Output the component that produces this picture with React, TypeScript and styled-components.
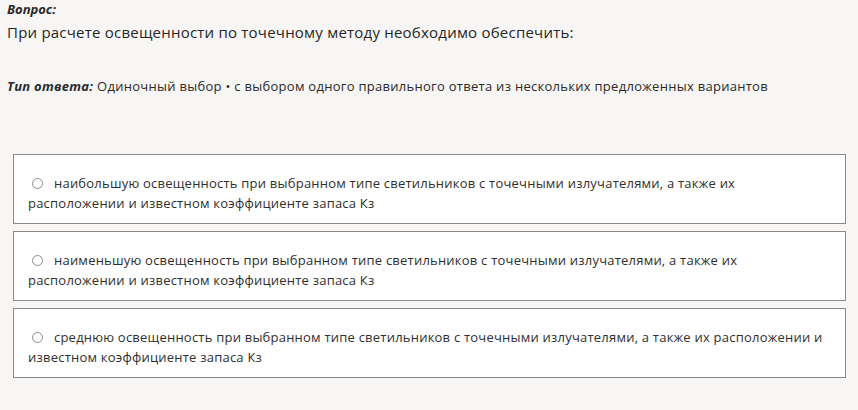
import React from 'react'
import styled, { createGlobalStyle } from 'styled-components'

const GlobalStyle = createGlobalStyle`
  html, body {
    margin: 0;
    padding: 0;
    background: #f7f6f5;
  }
  body {
    font-family: 'Open Sans', 'Noto Sans', sans-serif;
    color: #222;
  }
`

const Page = styled.div`
  width: 858px;
  height: 410px;
  padding: 0 12px 0 7px;
  box-sizing: border-box;
  overflow: hidden;
`

const Label = styled.div`
  font-size: 13px;
  font-weight: 700;
  font-style: italic;
  line-height: 18px;
  color: #2a2a2a;
`

const QuestionText = styled.div`
  font-size: 15px;
  line-height: 20px;
  letter-spacing: 0.22px;
  margin-top: 4px;
  color: #262626;
`

const AnswerType = styled.div`
  margin-top: 35px;
  font-size: 13px;
  line-height: 18px;
  letter-spacing: 0.28px;
  color: #2a2a2a;

  b {
    font-weight: 700;
    font-style: italic;
  }
`

const Options = styled.div`
  margin: 59px 0 0 6px;
  display: flex;
  flex-direction: column;
  gap: 7px;
`

const Option = styled.label`
  display: block;
  height: 70px;
  box-sizing: border-box;
  border: 1px solid #8a8a8a;
  background: #fff;
  padding: 18px 14px 0 14px;
  font-size: 13px;
  line-height: 20px;
  letter-spacing: 0.22px;
  color: #2f2f2f;
  cursor: pointer;
`

const Radio = styled.span`
  display: inline-block;
  width: 9px;
  height: 9px;
  border: 1px solid #8c8c8c;
  border-radius: 50%;
  margin: 0 11px 0 4px;
  vertical-align: -1px;
  background: #fff;
`

const lineBreaks = [
  ['наибольшую освещенность при выбранном типе светильников с точечными излучателями, а также их', 'расположении и известном коэффициенте запаса Кз'],
  ['наименьшую освещенность при выбранном типе светильников с точечными излучателями, а также их', 'расположении и известном коэффициенте запаса Кз'],
  ['среднюю освещенность при выбранном типе светильников с точечными излучателями, а также их расположении и', 'известном коэффициенте запаса Кз'],
]

export default function App() {
  return (
    <>
      <GlobalStyle />
      <Page>
        <Label>Вопрос:</Label>
        <QuestionText>При расчете освещенности по точечному методу необходимо обеспечить:</QuestionText>
        <AnswerType>
          <b>Тип ответа:</b> Одиночный выбор • с выбором одного правильного ответа из нескольких предложенных вариантов
        </AnswerType>
        <Options>
          {lineBreaks.map(([first, second]) => (
            <Option key={first}>
              <Radio />
              {first}
              <br />
              {second}
            </Option>
          ))}
        </Options>
      </Page>
    </>
  )
}
